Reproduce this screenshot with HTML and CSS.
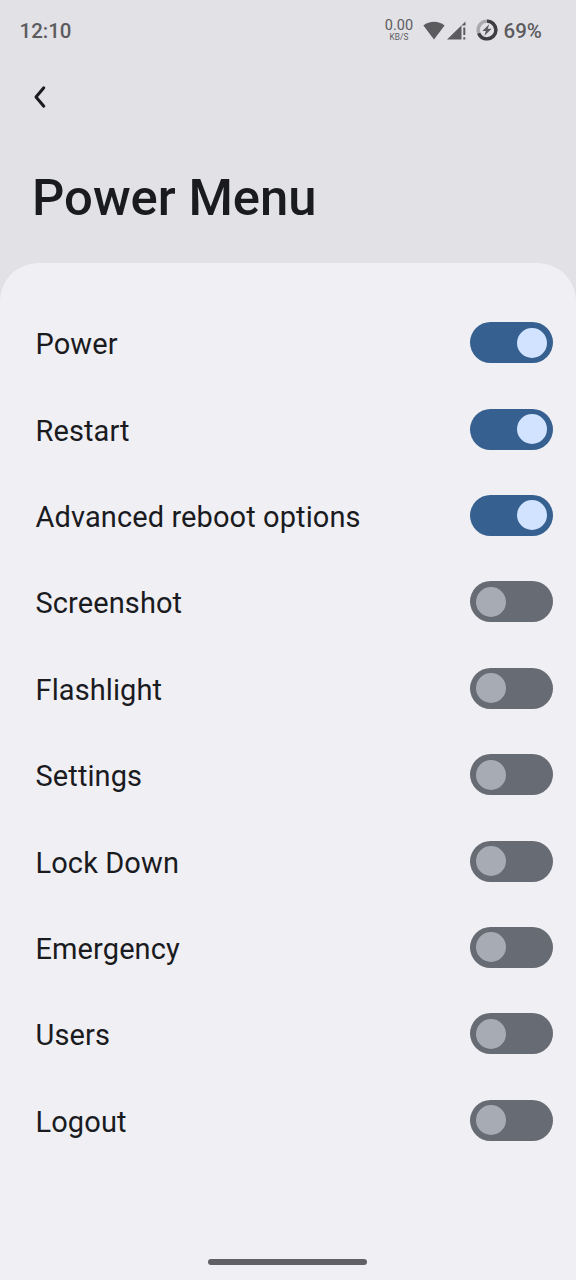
FILE: index.html
```html
<!DOCTYPE html>
<html lang="en">
<head>
<meta charset="utf-8">
<title>Power Menu</title>
<link rel="stylesheet" href="styles.css">
</head>
<body>
<div class="screen">
  <div class="status-bar">
    <span class="clock">12:10</span>
    <div class="net-speed"><span class="net-value">0.00</span><span class="net-unit">KB/S</span></div>
    <svg class="wifi" width="22" height="19" viewBox="0 0 22 19"><path d="M0.400 4.400C6.500-0.600 15.500-0.600 21.600 4.400L11 18.400z"/></svg>
    <svg class="signal" width="20" height="19" viewBox="0 0 20 19"><path d="M0 18.500L18.500 0.500V4.500H14.500V18.500z"/><path d="M16.300 6.500h2v7.500h-2zM16.300 16.200h2v2.300h-2z"/></svg>
    <svg class="battery" width="22" height="22" viewBox="0 0 22 22"><circle class="track" cx="11" cy="11" r="8.900"/><circle class="level" cx="11" cy="11" r="8.900" pathLength="100" stroke-dasharray="69 31" transform="rotate(-90 11 11)"/><path d="M13.200 5.200L6.300 12H9.800L8.400 16.800L15.700 9.800H11.800z"/></svg>
    <span class="percent">69%</span>
  </div>
  <header class="header">
    <svg class="back" width="14" height="24" viewBox="0 0 14 24"><path d="M10.800 2.800L3 12L10.800 21.200"/></svg>
    <h1 class="title">Power Menu</h1>
  </header>
  <main class="panel">
    <ul class="options">
      <li class="option"><span class="label">Power</span><span class="switch on"><span class="knob"></span></span></li>
      <li class="option"><span class="label">Restart</span><span class="switch on"><span class="knob"></span></span></li>
      <li class="option"><span class="label">Advanced reboot options</span><span class="switch on"><span class="knob"></span></span></li>
      <li class="option"><span class="label">Screenshot</span><span class="switch"><span class="knob"></span></span></li>
      <li class="option"><span class="label">Flashlight</span><span class="switch"><span class="knob"></span></span></li>
      <li class="option"><span class="label">Settings</span><span class="switch"><span class="knob"></span></span></li>
      <li class="option"><span class="label">Lock Down</span><span class="switch"><span class="knob"></span></span></li>
      <li class="option"><span class="label">Emergency</span><span class="switch"><span class="knob"></span></span></li>
      <li class="option"><span class="label">Users</span><span class="switch"><span class="knob"></span></span></li>
      <li class="option"><span class="label">Logout</span><span class="switch"><span class="knob"></span></span></li>
    </ul>
    <div class="nav-handle"></div>
  </main>
</div>
</body>
</html>
```
FILE: styles.css
```css
* { box-sizing: border-box; }
body {
  margin: 0;
  background: #e2e1e6;
  color: #1a1b1f;
  font-family: Roboto, "Liberation Sans", sans-serif;
}
.screen {
  display: flex;
  flex-direction: column;
  height: 1280px;
}
.status-bar {
  display: flex;
  align-items: center;
  height: 60px;
  padding: 0 33.500px 0 19.500px;
  color: #5c5c5f;
  fill: #5c5c5f;
}
.clock {
  margin-right: auto;
  font-size: 20.500px;
  font-weight: 500;
  letter-spacing: 0;
  padding-top: 2px;
}
.net-speed {
  display: flex;
  flex-direction: column;
  align-items: center;
  width: 30px;
  margin-right: 9px;
  padding-top: 1px;
}
.net-value { font-size: 14.500px; line-height: 14px; }
.net-unit { font-size: 8.300px; line-height: 9px; letter-spacing: 0.100px; }
.wifi { margin-right: 2px; }
.signal { margin-right: 9px; }
.battery { margin-right: 5.500px; }
.track, .level { fill: none; stroke-width: 3.400; }
.track { stroke: #aaaaae; }
.level { stroke: #3e3e41; }
.percent {
  width: 39px;
  font-size: 20.500px;
  font-weight: 500;
  padding-top: 2px;
}
.header {
  height: 202.500px;
  padding: 24.500px 32px 0;
}
.back {
  display: block;
  margin-left: 1px;
  fill: none;
  stroke: #1a1b1f;
  stroke-width: 3;
  stroke-linecap: round;
  stroke-linejoin: round;
}
.title {
  margin: 59px 0 0;
  font-size: 50.800px;
  line-height: 60px;
  font-weight: 500;
}
.panel {
  display: flex;
  flex-direction: column;
  flex: 1;
  padding: 37px 23.500px 15px 35.500px;
  border-radius: 38px 38px 0 0;
  background: #f0eff4;
}
.options { margin: 0; padding: 0; list-style: none; }
.option {
  display: flex;
  align-items: center;
  justify-content: space-between;
  height: 86.400px;
}
.label {
  padding-top: 3px;
  font-size: 29px;
  line-height: 34px;
  letter-spacing: 0.100px;
}
.switch {
  display: flex;
  width: 82.200px;
  height: 41px;
  padding: 5.500px;
  border-radius: 20.500px;
  background: #676b73;
}
.switch.on { justify-content: flex-end; background: #35608f; }
.knob {
  width: 30px;
  height: 30px;
  border-radius: 50%;
  background: #a7abb4;
}
.on .knob { background: #d1e3ff; }
.nav-handle {
  width: 159px;
  height: 6px;
  margin: auto auto 0 172.500px;
  border-radius: 3px;
  background: #606063;
}
```
